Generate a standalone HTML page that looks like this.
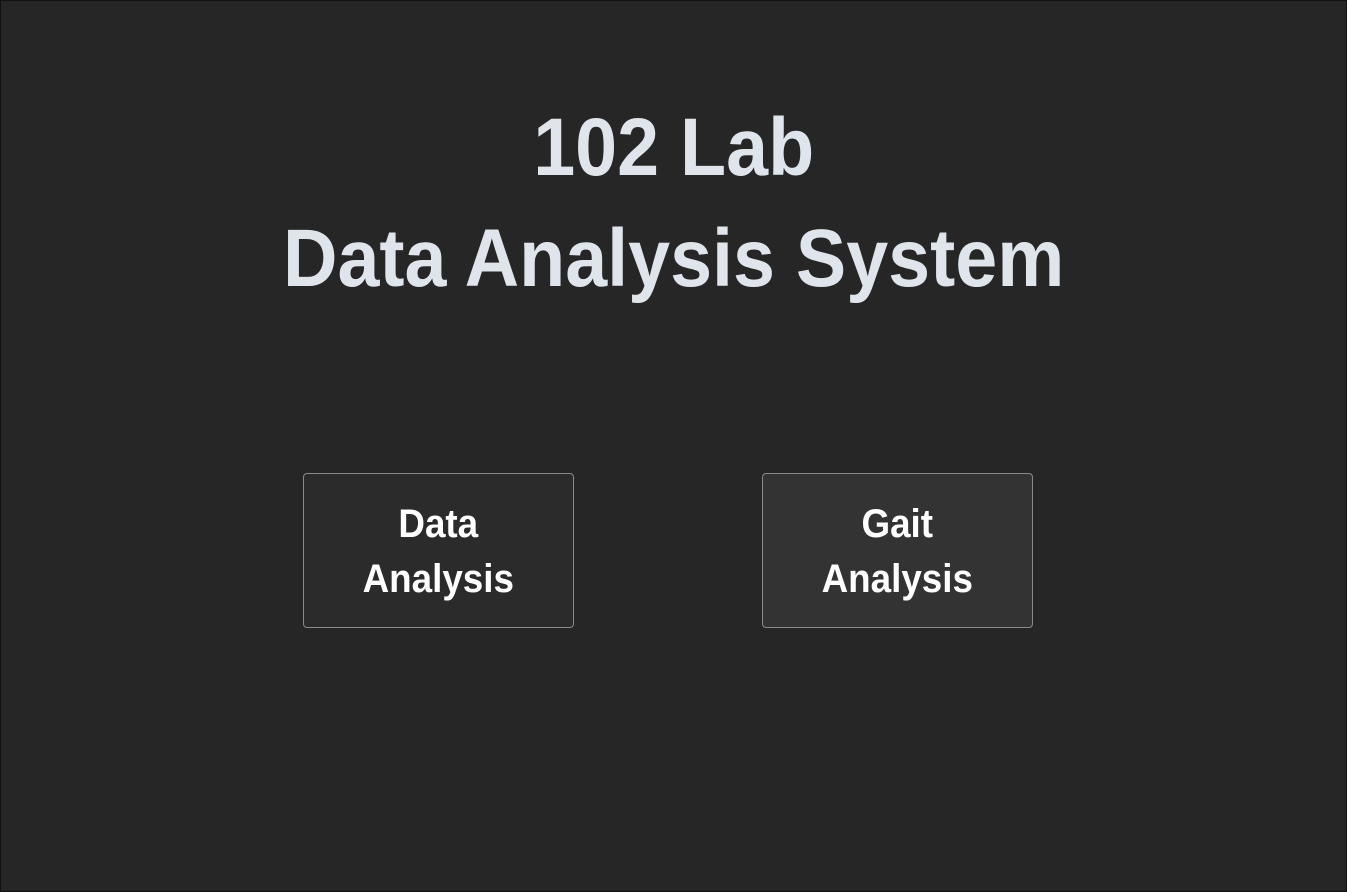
<!DOCTYPE html>
<html><head><style>
html,body{margin:0;padding:0;width:1347px;height:892px;background:#262626;overflow:hidden;font-family:"Liberation Sans",sans-serif;font-weight:bold}
.frame{position:absolute;left:0;top:0;width:1345px;height:890px;border:1px solid #111}
.t{position:absolute;left:0;width:1347px;text-align:center;color:#dfe5ea;font-size:82px;line-height:82px;white-space:nowrap}
.t span{display:inline-block;transform:scaleX(0.92)}
.b{position:absolute;top:473px;width:269px;height:153px;border:1px solid #8a8a8a;border-radius:4px;background:#2b2b2b;color:#fff;text-align:center;font-size:40px;line-height:55px;box-sizing:content-box}
.b span{display:inline-block;transform:scaleX(0.92);margin-top:23px}
</style></head><body>
<div class="frame"></div>
<div class="t" style="top:107px"><span>102 Lab</span></div>
<div class="t" style="top:218px"><span>Data Analysis System</span></div>
<div class="b" style="left:303px"><span>Data<br>Analysis</span></div>
<div class="b" style="left:762px;background:#333"><span>Gait<br>Analysis</span></div>
</body></html>
